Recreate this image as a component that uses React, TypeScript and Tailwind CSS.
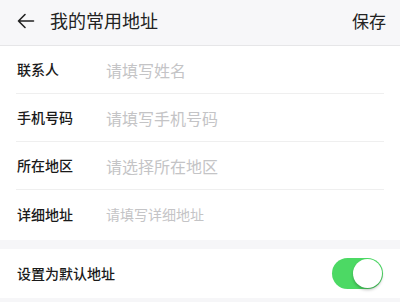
import React from "react";

const font = { fontFamily: '"Noto Sans CJK SC", "Noto Sans", sans-serif' };

function Row({ label, placeholder, small, last }: { label: string; placeholder: string; small?: boolean; last?: boolean }) {
  return (
    <div className="px-4 bg-white">
      <div className={`flex items-center ${last ? "h-[50px] pb-[2px]" : "h-[48px] border-b border-[#efefef]"}`}>
        <div className="w-[90px] shrink-0 text-[14px] font-medium text-[#1a1a1a] pl-[1px]">{label}</div>
        <div className={`${small ? "text-[14px]" : "text-[16px]"} text-[#c4c4c6]`}>{placeholder}</div>
      </div>
    </div>
  );
}

export default function App() {
  return (
    <div className="w-[400px] h-[302px] bg-[#f6f6f8] overflow-hidden" style={font}>
      <div className="h-[46px] bg-[#f7f7f9] border-b border-[#e6e6e8] flex items-center px-4 pb-[4px]">
        <svg width="18" height="16" viewBox="0 0 18 16" className="ml-[1px]">
          <path d="M1.5 8 H16.5 M8 1.5 L1.5 8 L8 14.5" fill="none" stroke="#222" strokeWidth="1.6" strokeLinecap="round" strokeLinejoin="round" />
        </svg>
        <div className="ml-[15px] text-[18px] text-[#222]">我的常用地址</div>
        <div className="ml-auto text-[17px] text-[#222] mr-[-2px]">保存</div>
      </div>
      <div className="bg-white">
        <Row label="联系人" placeholder="请填写姓名" />
        <Row label="手机号码" placeholder="请填写手机号码" />
        <Row label="所在地区" placeholder="请选择所在地区" />
        <Row label="详细地址" placeholder="请填写详细地址" small last />
      </div>
      <div className="h-[9px]" />
      <div className="bg-white h-[49px] flex items-center px-4">
        <div className="text-[14px] font-medium text-[#1a1a1a] pl-[1px]">设置为默认地址</div>
        <div className="ml-auto mr-[1px] w-[51px] h-[31px] rounded-full bg-[#4cd964] relative">
          <div className="absolute right-[1px] top-[1px] w-[29px] h-[29px] rounded-full bg-white shadow-[0_2px_3px_rgba(0,0,0,0.25)]" />
        </div>
      </div>
    </div>
  );
}
